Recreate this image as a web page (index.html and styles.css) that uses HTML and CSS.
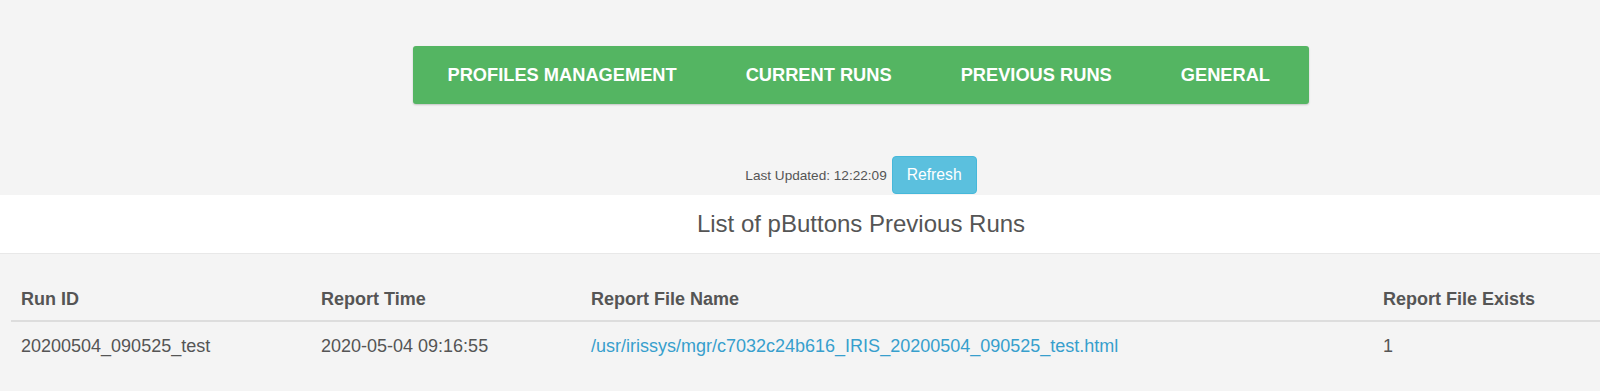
FILE: index.html
```html
<!DOCTYPE html>
<html lang="en">
<head>
    <meta charset="UTF-8">
    <meta name="viewport" content="width=device-width, initial-scale=1.0">
    <title>pButtons - Previous Runs</title>
    <link rel="stylesheet" href="styles.css">
</head>
<body>

    <div class="page">
        <nav class="menu">
            <a href="#" class="menu-item">PROFILES MANAGEMENT</a>
            <a href="#" class="menu-item">CURRENT RUNS</a>
            <a href="#" class="menu-item">PREVIOUS RUNS</a>
            <a href="#" class="menu-item">GENERAL</a>
        </nav>

        <div class="status">
            <span class="last-updated">Last Updated: 12:22:09</span>
            <button type="button" class="btn-refresh">Refresh</button>
        </div>

        <div class="title-band">
            <h2>List of pButtons Previous Runs</h2>
        </div>

        <table class="runs">
            <thead>
                <tr>
                    <th class="col-id">Run ID</th>
                    <th class="col-time">Report Time</th>
                    <th class="col-file">Report File Name</th>
                    <th>Report File Exists</th>
                </tr>
            </thead>
            <tbody>
                <tr>
                    <td class="col-id">20200504_090525_test</td>
                    <td>2020-05-04 09:16:55</td>
                    <td><a href="#">/usr/irissys/mgr/c7032c24b616_IRIS_20200504_090525_test.html</a></td>
                    <td>1</td>
                </tr>
            </tbody>
        </table>
    </div>

</body>
</html>
```

FILE: styles.css
```css
body {
    font-family: "Liberation Sans", Arial, sans-serif;
    background-color: #f4f4f4;
    color: #555;
    margin: 0;
    padding: 0;
}

.page {
    width: 1600px;
}

/* top menu */
.menu {
    display: flex;
    width: 896px;
    margin: 46px 0 0 413px;
    background-color: #54b562;
    border-radius: 3px;
    box-shadow: 0 1px 2px rgba(0, 0, 0, 0.2);
}

.menu-item {
    padding: 0 34.5px;
    line-height: 58px;
    font-size: 18.25px;
    font-weight: bold;
    color: #ffffff;
    text-decoration: none;
    white-space: nowrap;
}

/* last updated + refresh */
.status {
    display: flex;
    justify-content: center;
    align-items: center;
    gap: 5px;
    margin-top: 52px;
    padding-left: 122px;
}

.last-updated {
    font-size: 13.6px;
    color: #555;
}

.btn-refresh {
    height: 38px;
    padding: 0 14px;
    font-family: inherit;
    font-size: 15.7px;
    color: #ffffff;
    background-color: #5bc0de;
    border: 1px solid #46b8da;
    border-radius: 4px;
    cursor: pointer;
}

/* title */
.title-band {
    margin-top: 1px;
    padding-left: 122px;
    background-color: #ffffff;
    border-bottom: 1px solid #e8e8e8;
}

.title-band h2 {
    margin: 0;
    text-align: center;
    line-height: 58px;
    font-size: 24px;
    font-weight: normal;
    color: #555;
}

/* table */
.runs {
    width: 1589px;
    margin: 24px 0 0 11px;
    border-collapse: collapse;
    font-size: 18px;
    line-height: 26px;
}

.runs th {
    text-align: left;
    font-weight: bold;
    padding: 8px;
    border-bottom: 2px solid #dddddd;
}

.runs td {
    padding: 11px 8px 8px;
}

.runs .col-id {
    width: 284px;
    padding-left: 10px;
}

.col-time {
    width: 254px;
}

.col-file {
    width: 776px;
}

.runs a {
    color: #379fcd;
    text-decoration: none;
}
```
